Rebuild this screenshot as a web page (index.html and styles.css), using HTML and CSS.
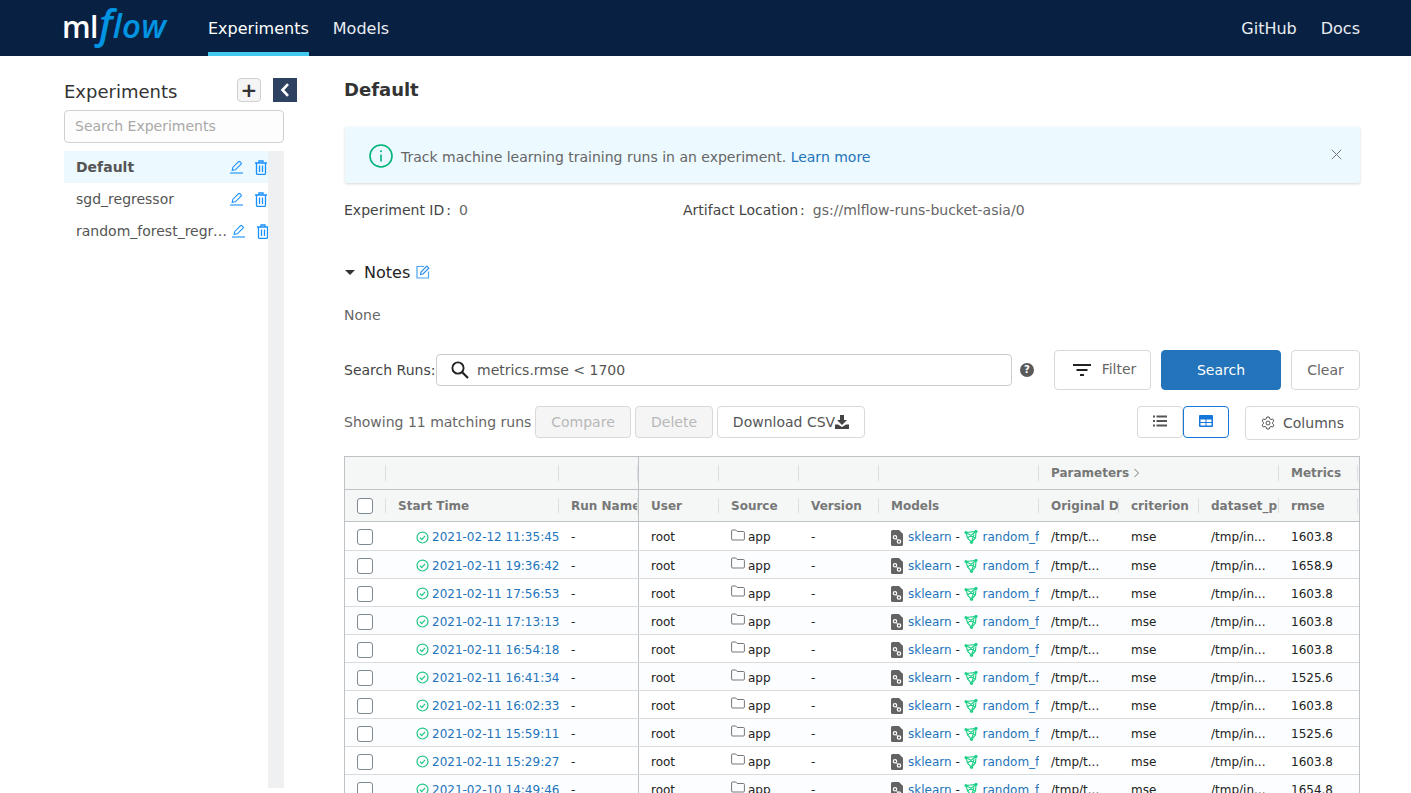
FILE: index.html
```html
<!DOCTYPE html>
<html lang="en">
<head>
    <meta charset="UTF-8">
    <meta name="viewport" content="width=device-width, initial-scale=1.0">
    <title>MLflow Experiments</title>
    <link rel="stylesheet" href="styles.css">
</head>
<body>
    <svg class="icon-defs" aria-hidden="true">
        <symbol id="i-edit" viewBox="0 0 14 14">
            <path d="M1 13h13" fill="none" stroke="currentColor" stroke-width="1.1"/>
            <path d="M3.2 10.4l.6-3L9.6 1.6a.8.8 0 0 1 1.1 0l1.4 1.4a.8.8 0 0 1 0 1.1L6.300 9.800z" fill="none" stroke="currentColor" stroke-width="1.1"/>
        </symbol>
        <symbol id="i-trash" viewBox="0 0 14 15">
            <path d="M1 3h12M5 3V1h4v2M2.500 3v10.500a.8.8 0 0 0 .8.8h7.400a.8.8 0 0 0 .8-.8V3M5.500 5.500v6.500M8.500 5.500v6.500" fill="none" stroke="currentColor" stroke-width="1.300"/>
        </symbol>
        <symbol id="i-check" viewBox="0 0 14 14">
            <circle cx="7" cy="7" r="5.900" fill="none" stroke="currentColor" stroke-width="1.300"/>
            <path d="M4.200 7.200l2 2 3.600-4" fill="none" stroke="currentColor" stroke-width="1.300"/>
        </symbol>
        <symbol id="i-folder" viewBox="0 0 14 12">
            <path d="M.6 2a1 1 0 0 1 1-1h3.200l1.400 1.500h6.200a1 1 0 0 1 1 1v6.500a1 1 0 0 1-1 1H1.600a1 1 0 0 1-1-1z" fill="none" stroke="currentColor" stroke-width=".9"/>
        </symbol>
        <symbol id="i-sklearn" viewBox="0 0 12 16">
            <path d="M1.500 0H8l4 4v10.500a1.500 1.500 0 0 1-1.500 1.500h-9A1.500 1.500 0 0 1 0 14.500v-13A1.500 1.500 0 0 1 1.500 0z" fill="#636363"/>
            <circle cx="4" cy="7.300" r="1.700" fill="none" stroke="#fff" stroke-width="1.200"/>
            <circle cx="8" cy="11.500" r="1.700" fill="none" stroke="#fff" stroke-width="1.200"/>
            <path d="M5.200 8.500l1.600 1.800" stroke="#fff"/>
        </symbol>
        <symbol id="i-model" viewBox="0 0 14 14">
            <path d="M2 2.500L12 1.500 11.500 8 7.500 12.300 3.500 8zM2 2.500L11.500 8M12 1.500L3.500 8M7.500 12.300L10 4.500" fill="none" stroke="#22d08a" stroke-width="1.200"/>
            <circle cx="2" cy="2.500" r="1.600" fill="#22d08a"/>
            <circle cx="12" cy="1.500" r="1.600" fill="#22d08a"/>
            <circle cx="7.500" cy="12.300" r="1.600" fill="#22d08a"/>
        </symbol>
    </svg>

    <header class="topbar">
        <a class="logo"><span class="logo-ml">ml</span><span class="logo-f">f</span><span class="logo-flow">low</span></a>
        <nav class="nav-left">
            <a class="nav-link nav-active">Experiments</a>
            <a class="nav-link">Models</a>
        </nav>
        <nav class="nav-right">
            <a class="nav-link">GitHub</a>
            <a class="nav-link">Docs</a>
        </nav>
    </header>

    <div class="page">
        <!-- Experiment list -->
        <aside class="sidebar">
            <div class="side-head">
                <span class="side-title">Experiments</span>
                <button class="add-btn">+</button>
                <button class="collapse-btn">
                    <svg width="10" height="14" viewBox="0 0 10 14"><path d="M8 1.200L2.500 7 8 12.800" fill="none" stroke="#fff" stroke-width="2.600"/></svg>
                </button>
            </div>
            <input class="side-search" type="text" placeholder="Search Experiments">
            <div class="side-list">
                <ul class="exp-list">
                    <li class="exp-item exp-selected">
                        <span class="exp-name">Default</span>
                        <svg class="exp-edit"><use href="#i-edit"/></svg>
                        <svg class="exp-trash"><use href="#i-trash"/></svg>
                    </li>
                    <li class="exp-item">
                        <span class="exp-name">sgd_regressor</span>
                        <svg class="exp-edit"><use href="#i-edit"/></svg>
                        <svg class="exp-trash"><use href="#i-trash"/></svg>
                    </li>
                    <li class="exp-item exp-long">
                        <span class="exp-name">random_forest_regressor</span>
                        <svg class="exp-edit"><use href="#i-edit"/></svg>
                        <svg class="exp-trash"><use href="#i-trash"/></svg>
                    </li>
                </ul>
                <div class="side-scroll"></div>
            </div>
        </aside>

        <!-- Experiment details -->
        <main class="main">
            <h1 class="title">Default</h1>

            <div class="alert">
                <svg class="alert-icon" width="24" height="24" viewBox="0 0 24 24">
                    <circle cx="12" cy="12" r="11" fill="none" stroke="#00b379" stroke-width="1.600"/>
                    <path d="M12 10.500v7" stroke="#00b379" stroke-width="1.600"/>
                    <circle cx="12" cy="7.300" r="1" fill="#00b379"/>
                </svg>
                <span class="alert-text">Track machine learning training runs in an experiment. <a class="link">Learn more</a></span>
                <svg class="alert-close" width="11" height="11" viewBox="0 0 11 11"><path d="M.8.8l9.400 9.400M10.200.8L.8 10.200" stroke="#777" stroke-width="1"/></svg>
            </div>

            <div class="meta">
                <div class="meta-id"><span class="meta-label">Experiment ID</span><span class="meta-colon">:</span><span class="meta-value">0</span></div>
                <div><span class="meta-label">Artifact Location</span><span class="meta-colon">:</span><span class="meta-value">gs://mlflow-runs-bucket-asia/0</span></div>
            </div>

            <div class="notes-head">
                <span class="caret"></span>
                <span class="notes-title">Notes</span>
                <svg width="14" height="14" viewBox="0 0 14 14">
                    <path d="M8 1.500H1v11.500h11.500V6.500" fill="none" stroke="#4aa3f0" stroke-width="1.200"/>
                    <path d="M4.500 9.500l.5-2.500L10.800 1.200l2 2L7 9z" fill="none" stroke="#2f8fe8" stroke-width="1.200"/>
                </svg>
            </div>
            <p class="notes-body">None</p>

            <div class="search-row">
                <label class="search-label">Search Runs:</label>
                <div class="search-box">
                    <svg width="20" height="20" viewBox="0 0 20 20"><circle cx="8" cy="8" r="5.600" fill="none" stroke="#222" stroke-width="1.900"/><path d="M12 12l6 6" stroke="#222" stroke-width="2.200"/></svg>
                    <span class="search-text">metrics.rmse &lt; 1700</span>
                </div>
                <span class="help">?</span>
                <button class="btn btn-filter">
                    <svg width="18" height="12" viewBox="0 0 18 12"><path d="M0 1h18M3.500 6h11M7 11h4" stroke="#222" stroke-width="2"/></svg>
                    <span>Filter</span>
                </button>
                <button class="btn btn-primary">Search</button>
                <button class="btn btn-clear">Clear</button>
            </div>

            <div class="actions-row">
                <span class="run-count">Showing 11 matching runs</span>
                <button class="btn btn-small btn-disabled btn-compare">Compare</button>
                <button class="btn btn-small btn-disabled btn-delete">Delete</button>
                <button class="btn btn-small btn-download">Download CSV<svg width="14" height="14" viewBox="0 0 14 14"><path d="M5 0h4v5h3L7 10 2 5h3z" fill="#444"/><path d="M0 9.500h3L7 12l4-2.500h3V14H0z" fill="#444"/></svg></button>
                <div class="toggle">
                    <button class="toggle-btn">
                        <svg width="14" height="12" viewBox="0 0 14 12"><path d="M0 1.500h2M3.500 1.500H14M0 6h2M3.500 6H14M0 10.500h2M3.500 10.500H14" stroke="#555" stroke-width="2"/></svg>
                    </button>
                    <button class="toggle-btn toggle-on">
                        <svg width="14" height="12" viewBox="0 0 14 12"><rect width="14" height="12" rx="1" fill="#1677d8"/><path d="M1.500 4.500h5v2.500h-5zM7.500 4.500h5v2.500h-5zM1.500 8h5v2.500h-5zM7.500 8h5v2.500h-5z" fill="#fff"/></svg>
                    </button>
                </div>
                <button class="btn btn-small btn-columns">
                    <svg width="14" height="14" viewBox="0 0 14 14"><path d="M5.800 1h2.400l.4 1.700 1.400.8 1.700-.5 1.200 2-1.300 1.200v1.600l1.300 1.200-1.200 2-1.700-.5-1.400.8-.4 1.700H5.800l-.4-1.700-1.400-.8-1.700.5-1.200-2 1.300-1.200V6.200L1.100 5l1.200-2 1.700.5 1.400-.8z" fill="none" stroke="#555" stroke-width="1"/><circle cx="7" cy="7" r="2" fill="none" stroke="#555"/></svg>
                    <span>Columns</span>
                </button>
            </div>

            <div class="grid">
                <div class="grid-row grid-group">
                    <div class="cell c-check"></div>
                    <div class="cell c-time"></div>
                    <div class="cell c-name"></div>
                    <div class="cell"></div>
                    <div class="cell"></div>
                    <div class="cell"></div>
                    <div class="cell c-models"></div>
                    <div class="cell c-params">Parameters <svg width="7" height="10" viewBox="0 0 7 10"><path d="M1.500 1l4 4-4 4" fill="none" stroke="#777"/></svg></div>
                    <div class="cell c-metric">Metrics</div>
                </div>
                <div class="grid-row grid-head">
                    <div class="cell c-check"><span class="box"></span></div>
                    <div class="cell c-time">Start Time</div>
                    <div class="cell c-name">Run Name</div>
                    <div class="cell">User</div>
                    <div class="cell">Source</div>
                    <div class="cell">Version</div>
                    <div class="cell c-models">Models</div>
                    <div class="cell">Original D</div>
                    <div class="cell">criterion</div>
                    <div class="cell">dataset_p</div>
                    <div class="cell c-metric">rmse</div>
                </div>

                <div class="grid-row grid-data">
                    <div class="cell c-check"><span class="box"></span></div>
                    <div class="cell c-time"><svg class="run-ok"><use href="#i-check"/></svg><a class="link">2021-02-12 11:35:45</a></div>
                    <div class="cell c-name">-</div>
                    <div class="cell">root</div>
                    <div class="cell"><svg class="folder"><use href="#i-folder"/></svg>app</div>
                    <div class="cell">-</div>
                    <div class="cell c-models"><svg class="sk"><use href="#i-sklearn"/></svg><a class="link">sklearn</a>&nbsp;-&nbsp;<svg class="md"><use href="#i-model"/></svg><a class="link model-link">random_f</a></div>
                    <div class="cell">/tmp/t...</div>
                    <div class="cell">mse</div>
                    <div class="cell">/tmp/in...</div>
                    <div class="cell c-metric">1603.8</div>
                </div>
                <div class="grid-row grid-data">
                    <div class="cell c-check"><span class="box"></span></div>
                    <div class="cell c-time"><svg class="run-ok"><use href="#i-check"/></svg><a class="link">2021-02-11 19:36:42</a></div>
                    <div class="cell c-name">-</div>
                    <div class="cell">root</div>
                    <div class="cell"><svg class="folder"><use href="#i-folder"/></svg>app</div>
                    <div class="cell">-</div>
                    <div class="cell c-models"><svg class="sk"><use href="#i-sklearn"/></svg><a class="link">sklearn</a>&nbsp;-&nbsp;<svg class="md"><use href="#i-model"/></svg><a class="link model-link">random_f</a></div>
                    <div class="cell">/tmp/t...</div>
                    <div class="cell">mse</div>
                    <div class="cell">/tmp/in...</div>
                    <div class="cell c-metric">1658.9</div>
                </div>
                <div class="grid-row grid-data">
                    <div class="cell c-check"><span class="box"></span></div>
                    <div class="cell c-time"><svg class="run-ok"><use href="#i-check"/></svg><a class="link">2021-02-11 17:56:53</a></div>
                    <div class="cell c-name">-</div>
                    <div class="cell">root</div>
                    <div class="cell"><svg class="folder"><use href="#i-folder"/></svg>app</div>
                    <div class="cell">-</div>
                    <div class="cell c-models"><svg class="sk"><use href="#i-sklearn"/></svg><a class="link">sklearn</a>&nbsp;-&nbsp;<svg class="md"><use href="#i-model"/></svg><a class="link model-link">random_f</a></div>
                    <div class="cell">/tmp/t...</div>
                    <div class="cell">mse</div>
                    <div class="cell">/tmp/in...</div>
                    <div class="cell c-metric">1603.8</div>
                </div>
                <div class="grid-row grid-data">
                    <div class="cell c-check"><span class="box"></span></div>
                    <div class="cell c-time"><svg class="run-ok"><use href="#i-check"/></svg><a class="link">2021-02-11 17:13:13</a></div>
                    <div class="cell c-name">-</div>
                    <div class="cell">root</div>
                    <div class="cell"><svg class="folder"><use href="#i-folder"/></svg>app</div>
                    <div class="cell">-</div>
                    <div class="cell c-models"><svg class="sk"><use href="#i-sklearn"/></svg><a class="link">sklearn</a>&nbsp;-&nbsp;<svg class="md"><use href="#i-model"/></svg><a class="link model-link">random_f</a></div>
                    <div class="cell">/tmp/t...</div>
                    <div class="cell">mse</div>
                    <div class="cell">/tmp/in...</div>
                    <div class="cell c-metric">1603.8</div>
                </div>
                <div class="grid-row grid-data">
                    <div class="cell c-check"><span class="box"></span></div>
                    <div class="cell c-time"><svg class="run-ok"><use href="#i-check"/></svg><a class="link">2021-02-11 16:54:18</a></div>
                    <div class="cell c-name">-</div>
                    <div class="cell">root</div>
                    <div class="cell"><svg class="folder"><use href="#i-folder"/></svg>app</div>
                    <div class="cell">-</div>
                    <div class="cell c-models"><svg class="sk"><use href="#i-sklearn"/></svg><a class="link">sklearn</a>&nbsp;-&nbsp;<svg class="md"><use href="#i-model"/></svg><a class="link model-link">random_f</a></div>
                    <div class="cell">/tmp/t...</div>
                    <div class="cell">mse</div>
                    <div class="cell">/tmp/in...</div>
                    <div class="cell c-metric">1603.8</div>
                </div>
                <div class="grid-row grid-data">
                    <div class="cell c-check"><span class="box"></span></div>
                    <div class="cell c-time"><svg class="run-ok"><use href="#i-check"/></svg><a class="link">2021-02-11 16:41:34</a></div>
                    <div class="cell c-name">-</div>
                    <div class="cell">root</div>
                    <div class="cell"><svg class="folder"><use href="#i-folder"/></svg>app</div>
                    <div class="cell">-</div>
                    <div class="cell c-models"><svg class="sk"><use href="#i-sklearn"/></svg><a class="link">sklearn</a>&nbsp;-&nbsp;<svg class="md"><use href="#i-model"/></svg><a class="link model-link">random_f</a></div>
                    <div class="cell">/tmp/t...</div>
                    <div class="cell">mse</div>
                    <div class="cell">/tmp/in...</div>
                    <div class="cell c-metric">1525.6</div>
                </div>
                <div class="grid-row grid-data">
                    <div class="cell c-check"><span class="box"></span></div>
                    <div class="cell c-time"><svg class="run-ok"><use href="#i-check"/></svg><a class="link">2021-02-11 16:02:33</a></div>
                    <div class="cell c-name">-</div>
                    <div class="cell">root</div>
                    <div class="cell"><svg class="folder"><use href="#i-folder"/></svg>app</div>
                    <div class="cell">-</div>
                    <div class="cell c-models"><svg class="sk"><use href="#i-sklearn"/></svg><a class="link">sklearn</a>&nbsp;-&nbsp;<svg class="md"><use href="#i-model"/></svg><a class="link model-link">random_f</a></div>
                    <div class="cell">/tmp/t...</div>
                    <div class="cell">mse</div>
                    <div class="cell">/tmp/in...</div>
                    <div class="cell c-metric">1603.8</div>
                </div>
                <div class="grid-row grid-data">
                    <div class="cell c-check"><span class="box"></span></div>
                    <div class="cell c-time"><svg class="run-ok"><use href="#i-check"/></svg><a class="link">2021-02-11 15:59:11</a></div>
                    <div class="cell c-name">-</div>
                    <div class="cell">root</div>
                    <div class="cell"><svg class="folder"><use href="#i-folder"/></svg>app</div>
                    <div class="cell">-</div>
                    <div class="cell c-models"><svg class="sk"><use href="#i-sklearn"/></svg><a class="link">sklearn</a>&nbsp;-&nbsp;<svg class="md"><use href="#i-model"/></svg><a class="link model-link">random_f</a></div>
                    <div class="cell">/tmp/t...</div>
                    <div class="cell">mse</div>
                    <div class="cell">/tmp/in...</div>
                    <div class="cell c-metric">1525.6</div>
                </div>
                <div class="grid-row grid-data">
                    <div class="cell c-check"><span class="box"></span></div>
                    <div class="cell c-time"><svg class="run-ok"><use href="#i-check"/></svg><a class="link">2021-02-11 15:29:27</a></div>
                    <div class="cell c-name">-</div>
                    <div class="cell">root</div>
                    <div class="cell"><svg class="folder"><use href="#i-folder"/></svg>app</div>
                    <div class="cell">-</div>
                    <div class="cell c-models"><svg class="sk"><use href="#i-sklearn"/></svg><a class="link">sklearn</a>&nbsp;-&nbsp;<svg class="md"><use href="#i-model"/></svg><a class="link model-link">random_f</a></div>
                    <div class="cell">/tmp/t...</div>
                    <div class="cell">mse</div>
                    <div class="cell">/tmp/in...</div>
                    <div class="cell c-metric">1603.8</div>
                </div>
                <div class="grid-row grid-data">
                    <div class="cell c-check"><span class="box"></span></div>
                    <div class="cell c-time"><svg class="run-ok"><use href="#i-check"/></svg><a class="link">2021-02-10 14:49:46</a></div>
                    <div class="cell c-name">-</div>
                    <div class="cell">root</div>
                    <div class="cell"><svg class="folder"><use href="#i-folder"/></svg>app</div>
                    <div class="cell">-</div>
                    <div class="cell c-models"><svg class="sk"><use href="#i-sklearn"/></svg><a class="link">sklearn</a>&nbsp;-&nbsp;<svg class="md"><use href="#i-model"/></svg><a class="link model-link">random_f</a></div>
                    <div class="cell">/tmp/t...</div>
                    <div class="cell">mse</div>
                    <div class="cell">/tmp/in...</div>
                    <div class="cell c-metric">1654.8</div>
                </div>
            </div>
        </main>
    </div>
</body>
</html>
```

FILE: styles.css
```css
/* General Reset */
html, body {
    height: 793px;
    overflow: hidden;
}

body {
    margin: 0;
    font-family: "DejaVu Sans", sans-serif;
    font-size: 14px;
    background-color: #fff;
    color: #555;
}

button {
    font-family: inherit;
    cursor: pointer;
}

.icon-defs {
    display: none;
}

.link {
    color: #2374bb;
    text-decoration: none;
}

/* Top Bar */
.topbar {
    display: flex;
    height: 56px;
    padding: 0 51px 0 64px;
    background-color: #082142;
}

.logo {
    display: flex;
    align-items: baseline;
    box-sizing: border-box;
    width: 144px;
    height: 56px;
    padding-top: 3px;
    line-height: 40px;
}

.logo-ml {
    margin-left: -2px;
    font-family: "Open Sans", sans-serif;
    font-size: 30px;
    font-weight: 600;
    letter-spacing: -0.5px;
    color: #fff;
}

.logo-f {
    margin-left: 1px;
    font-family: "Open Sans", sans-serif;
    font-size: 40px;
    font-style: italic;
    font-weight: 600;
    color: #0194e2;
}

.logo-flow {
    font-family: "Open Sans", sans-serif;
    font-size: 33px;
    font-style: italic;
    font-weight: 600;
    letter-spacing: 0.3px;
    color: #0194e2;
}

.nav-left, .nav-right {
    display: flex;
    gap: 24px;
}

.nav-right {
    margin-left: auto;
}

.nav-link {
    box-sizing: border-box;
    height: 56px;
    line-height: 57px;
    font-size: 16px;
    color: #e8edf2;
}

.nav-active {
    color: #fff;
    border-bottom: 4px solid #43c9ed;
}

/* Page Wrapper */
.page {
    display: flex;
    gap: 60px;
    padding: 0 51px 0 64px;
}

/* Sidebar */
.sidebar {
    flex: 0 0 220px;
    width: 220px;
    padding-top: 22px;
}

.side-head {
    display: flex;
    align-items: center;
    height: 24px;
    margin-right: -13px;
    margin-bottom: 8px;
}

.side-title {
    flex: 1;
    font-size: 18px;
    line-height: 26px;
    margin-top: 4px;
    color: #333;
}

.add-btn {
    box-sizing: border-box;
    width: 24px;
    height: 24px;
    padding: 0;
    border: 1px solid #d0d0d0;
    border-radius: 4px;
    background-color: #f5f5f5;
    font-size: 20px;
    line-height: 20px;
    font-weight: bold;
    color: #333;
}

.collapse-btn {
    display: flex;
    align-items: center;
    justify-content: center;
    width: 24px;
    height: 24px;
    margin-left: 12px;
    padding: 0;
    border: none;
    background-color: #2c4260;
}

.side-search {
    display: block;
    box-sizing: border-box;
    width: 220px;
    height: 33px;
    padding: 0 10px 2px;
    border: 1px solid #d0d0d0;
    border-radius: 4px;
    background-color: #fdfdfd;
    font-family: inherit;
    font-size: 14px;
}

.side-search::placeholder {
    color: #a8a8a8;
}

.side-list {
    display: flex;
    height: 637px;
    margin-top: 8px;
}

.exp-list {
    flex: 1;
    min-width: 0;
    margin: 0;
    padding: 0;
    list-style: none;
}

.side-scroll {
    flex: 0 0 16px;
    background-color: #eef0f2;
}

.exp-item {
    display: flex;
    align-items: center;
    height: 32px;
    padding-left: 12px;
    color: #555;
}

.exp-selected {
    background-color: #ecf9fe;
    font-weight: bold;
}

.exp-name {
    flex: 1;
    min-width: 0;
    overflow: hidden;
    white-space: nowrap;
    text-overflow: ellipsis;
}

.exp-edit {
    flex: none;
    width: 14px;
    height: 14px;
    margin-right: 11px;
    color: #1890ff;
}

.exp-trash {
    flex: none;
    width: 14px;
    height: 15px;
    color: #1890ff;
}

.exp-long .exp-name {
    margin-right: 1px;
}

.exp-long .exp-trash {
    margin-right: -2px;
}

/* Main Column */
.main {
    flex: 0 0 1016px;
    width: 1016px;
}

.title {
    margin: 22px 0 0;
    font-size: 18px;
    line-height: 24px;
    font-weight: bold;
    color: #333;
}

.alert {
    display: flex;
    align-items: center;
    box-sizing: border-box;
    height: 56px;
    margin: 25px 0 0 1px;
    padding: 0 18px 0 24px;
    border-radius: 2px;
    background-color: #ecf9fe;
    box-shadow: 0 1px 3px rgba(0, 0, 0, 0.16);
}

.alert-icon {
    margin-top: 2px;
}

.alert-text {
    flex: 1;
    margin: 4px 0 0 8px;
    color: #666;
}

.alert-close {
    margin-top: -2px;
}

.meta {
    display: flex;
    margin-top: 18px;
    line-height: 18px;
    color: #666;
}

.meta-id {
    width: 339px;
}

.meta-label {
    color: #444;
}

.meta-colon {
    margin: 0 8px 0 2px;
    color: #444;
}

.notes-head {
    display: flex;
    align-items: center;
    margin-top: 41px;
    height: 24px;
}

.caret {
    width: 0;
    height: 0;
    margin: 0 9px 0 1px;
    border-left: 5px solid transparent;
    border-right: 5px solid transparent;
    border-top: 5px solid #333;
}

.notes-title {
    margin-right: 6px;
    font-size: 16px;
    color: #222;
}

.notes-body {
    margin: 22px 0 0;
    line-height: 18px;
    color: #666;
}

/* Search Row */
.search-row {
    display: flex;
    align-items: center;
    height: 40px;
    margin-top: 26px;
}

.search-label {
    width: 92px;
    color: #444;
}

.search-box {
    display: flex;
    align-items: center;
    box-sizing: border-box;
    width: 576px;
    height: 32px;
    padding: 0 13px;
    border: 1px solid #ccc;
    border-radius: 4px;
}

.search-text {
    margin-left: 7px;
    color: #555;
}

.help {
    flex: none;
    width: 14px;
    height: 14px;
    margin: 0 20px 0 8px;
    border-radius: 50%;
    background-color: #5a5a5a;
    color: #fff;
    font-size: 10px;
    font-weight: bold;
    line-height: 14px;
    text-align: center;
}

.btn {
    box-sizing: border-box;
    height: 40px;
    border: 1px solid #d9d9d9;
    border-radius: 4px;
    background-color: #fff;
    color: #666;
    font-size: 14px;
}

.btn-filter {
    display: flex;
    align-items: center;
    justify-content: center;
    gap: 11px;
    width: 97px;
    padding-left: 10px;
}

.btn-filter span {
    margin-top: -2px;
}

.btn-primary {
    width: 120px;
    margin-left: 10px;
    border-color: #2374bb;
    background-color: #2374bb;
    color: #fff;
}

.btn-clear {
    width: 69px;
    margin-left: 10px;
}

/* Action Row */
.actions-row {
    display: flex;
    align-items: flex-start;
    margin-top: 16px;
    height: 34px;
}

.run-count {
    width: 191px;
    line-height: 32px;
    color: #666;
}

.btn-small {
    height: 32px;
}

.btn-disabled {
    background-color: #f5f5f5;
    color: #b8b8b8;
}

.btn-compare {
    width: 96px;
}

.btn-delete {
    width: 78px;
    margin-left: 4px;
}

.btn-download {
    display: flex;
    align-items: center;
    justify-content: center;
    width: 148px;
    margin-left: 4px;
    color: #555;
}

.toggle {
    display: flex;
    margin-left: auto;
}

.toggle-btn {
    box-sizing: border-box;
    width: 46px;
    height: 32px;
    padding: 0;
    border: 1px solid #d9d9d9;
    border-radius: 4px;
    background-color: #fff;
}

.toggle-on {
    border-color: #1677d8;
}

.btn-columns {
    display: flex;
    align-items: center;
    justify-content: center;
    gap: 8px;
    width: 115px;
    height: 34px;
    margin-left: 16px;
    color: #555;
}

/* Runs Table */
.grid {
    box-sizing: border-box;
    width: 1016px;
    margin-top: 16px;
    border: 1px solid #bdc3c7;
    border-bottom: none;
    font-size: 12px;
    color: #222;
}

.grid-row {
    display: grid;
    grid-template-columns: 41px 173px 80px 80px 80px 80px 160px 80px 80px 80px 79px;
    align-items: center;
}

.cell {
    box-sizing: border-box;
    display: flex;
    align-items: center;
    min-width: 0;
    height: 100%;
    padding-left: 12px;
    overflow: hidden;
    white-space: nowrap;
}

.c-check {
    justify-content: center;
    padding: 0 1px 0 0;
}

.c-name {
    border-right: 1px solid #bdc3c7;
}

.grid-group, .grid-head {
    background-color: #f5f7f7;
    color: #777;
    font-weight: bold;
    border-bottom: 1px solid #bdc3c7;
}

.grid-group {
    height: 32px;
}

.grid-head {
    height: 31px;
}

.grid-group .cell, .grid-head .cell {
    position: relative;
}

/* Short divider lines between header cells */
.grid-group .cell::after, .grid-head .cell::after {
    content: "";
    position: absolute;
    right: 0;
    top: 8px;
    bottom: 8px;
    width: 1px;
    background-color: #dde0e2;
}

.c-params {
    grid-column: span 3;
    gap: 4px;
}

.grid-data {
    box-sizing: border-box;
    height: 28px;
    border-bottom: 1px solid #d9dcde;
}

.grid-head + .grid-data {
    height: 29px;
}

.grid-data .cell {
    padding-top: 2px;
}

.grid-data:nth-child(even) {
    background-color: #fcfdfe;
}

.grid-data .c-time {
    padding-left: 30px;
}

.box {
    box-sizing: border-box;
    width: 16px;
    height: 16px;
    border: 1px solid #7c8a92;
    border-radius: 3px;
    background-color: #fff;
}

.run-ok {
    flex: none;
    width: 13px;
    height: 13px;
    margin-right: 3px;
    color: #21c585;
}

.folder {
    flex: none;
    width: 14px;
    height: 12px;
    margin: -5px 3px 0 0;
    color: #666;
}

.sk {
    flex: none;
    width: 12px;
    height: 16px;
    margin: 1px 5px 0 0;
}

.md {
    flex: none;
    width: 14px;
    height: 14px;
    margin-right: 5px;
}

.model-link {
    min-width: 0;
    overflow: hidden;
}
```
